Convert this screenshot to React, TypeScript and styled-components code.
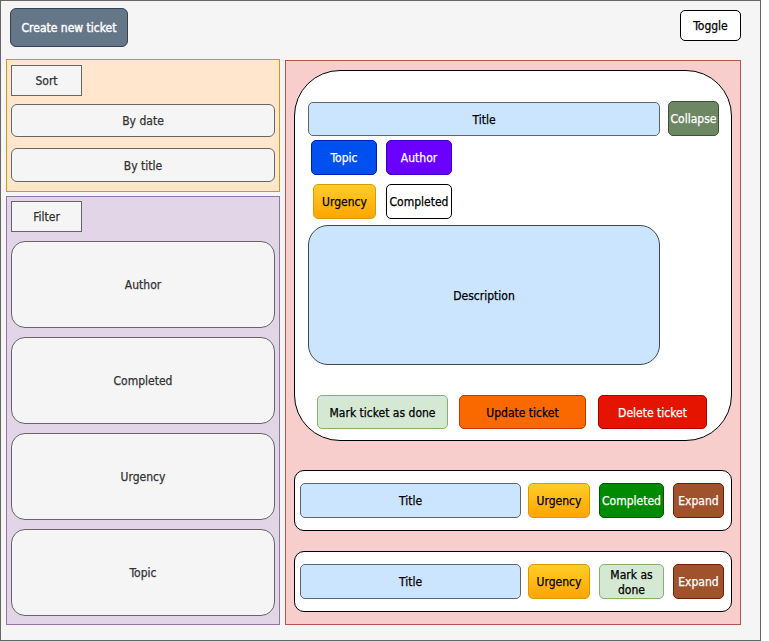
import React from 'react';
import styled, { createGlobalStyle, css } from 'styled-components';

const GlobalStyle = createGlobalStyle`
  html, body {
    margin: 0;
    padding: 0;
    background: #ffffff;
  }
  body {
    font-family: 'DejaVu Sans Condensed', 'DejaVu Sans', sans-serif;
    font-size: 12px;
  }
  * {
    box-sizing: border-box;
  }
`;

const Frame = styled.div`
  width: 761px;
  height: 641px;
  display: flex;
  flex-direction: column;
  background: #f5f5f5;
  border: 1px solid #666666;
`;

const Header = styled.div`
  height: 58px;
  display: flex;
  align-items: flex-start;
  justify-content: space-between;
  padding: 0 19px 0 9px;
  flex-shrink: 0;
`;

// shared centred-label look for every drawn box
const boxText = css`
  display: flex;
  align-items: center;
  justify-content: center;
  text-align: center;
  font-family: inherit;
  font-size: 12px;
  line-height: 15px;
  -webkit-text-stroke: 0.25px currentColor;
  padding: 2px 0 0;
  flex-shrink: 0;
`;

const CreateButton = styled.button`
  ${boxText};
  width: 118px;
  height: 39px;
  margin-top: 7px;
  background: #647687;
  border: 1px solid #314354;
  border-radius: 6px;
  color: #ffffff;
  -webkit-text-stroke: 0.4px currentColor;
`;

const ToggleButton = styled.button`
  ${boxText};
  width: 61px;
  height: 31px;
  margin-top: 9px;
  background: #ffffff;
  border: 1px solid #000000;
  border-radius: 5px;
  color: #000000;
`;

const Body = styled.div`
  flex: 1;
  display: flex;
  align-items: flex-start;
  gap: 5px;
  padding: 0 0 15px 5px;
  min-height: 0;
`;

const LeftColumn = styled.div`
  width: 274px;
  height: 100%;
  display: flex;
  flex-direction: column;
  gap: 4px;
`;

interface PanelProps {
  $fill: string;
  $stroke: string;
  $gap: number;
  $padTop: number;
  $grow?: boolean;
}

const Panel = styled.section<PanelProps>`
  display: flex;
  flex-direction: column;
  gap: ${({ $gap }) => $gap}px;
  padding: ${({ $padTop }) => $padTop}px 4px 0 4px;
  background: ${({ $fill }) => $fill};
  border: 1px solid ${({ $stroke }) => $stroke};
  height: ${({ $grow }) => ($grow ? 'auto' : '133px')};
  flex: ${({ $grow }) => ($grow ? 1 : 'none')};
`;

const PanelLabel = styled.div`
  ${boxText};
  width: 71px;
  height: 31px;
  background: #f5f5f5;
  border: 1px solid #666666;
  color: #333333;
`;

const OptionButton = styled.button<{ $height: number; $radius: number }>`
  ${boxText};
  width: 264px;
  height: ${({ $height }) => $height}px;
  background: #f5f5f5;
  border: 1px solid #666666;
  border-radius: ${({ $radius }) => $radius}px;
  color: #333333;
`;

const TicketPanel = styled.section`
  width: 456px;
  height: calc(100% - 1px);
  margin-top: 1px;
  display: flex;
  flex-direction: column;
  padding: 9px 8px 0 8px;
  background: #f8cecc;
  border: 1px solid #b85450;
`;

const ExpandedCard = styled.article`
  height: 371px;
  display: flex;
  flex-direction: column;
  align-items: flex-start;
  padding: 30px 0 0 13px;
  background: #ffffff;
  border: 1px solid #000000;
  border-radius: 46px;
`;

const Row = styled.div<{ $gap: number; $top?: number; $left?: number }>`
  display: flex;
  align-items: flex-start;
  gap: ${({ $gap }) => $gap}px;
  margin-top: ${({ $top = 0 }) => $top}px;
  padding-left: ${({ $left = 0 }) => $left}px;
`;

interface ChipProps {
  $w: number;
  $h?: number;
  $bg: string;
  $border: string;
  $color?: string;
  $radius?: number;
  $top?: number;
}

const Chip = styled.div<ChipProps>`
  ${boxText};
  width: ${({ $w }) => $w}px;
  height: ${({ $h = 35 }) => $h}px;
  margin-top: ${({ $top = 0 }) => $top}px;
  background: ${({ $bg }) => $bg};
  border: 1px solid ${({ $border }) => $border};
  border-radius: ${({ $radius = 5 }) => $radius}px;
  color: ${({ $color = '#000000' }) => $color};
`;

const Description = styled.div`
  ${boxText};
  width: 352px;
  height: 140px;
  margin-top: 6px;
  background: #cce5ff;
  border: 1px solid #42474d;
  border-radius: 20px;
  color: #000000;
`;

const SummaryCard = styled.article<{ $top: number }>`
  height: 61px;
  margin-top: ${({ $top }) => $top}px;
  display: flex;
  align-items: center;
  padding-left: 5px;
  background: #ffffff;
  border: 1px solid #000000;
  border-radius: 10px;
`;

const TITLE_BLUE = '#cce5ff';
const TITLE_STROKE = '#5c6570';
const URGENCY_BG = 'linear-gradient(180deg, #ffcd28 0%, #ffa500 100%)';

const filters = ['Author', 'Completed', 'Urgency', 'Topic'];

function TicketSummary({ top, done }: { top: number; done: boolean }) {
  return (
    <SummaryCard $top={top}>
      <Row $gap={0}>
        <Chip $w={221} $bg={TITLE_BLUE} $border={TITLE_STROKE}>
          Title
        </Chip>
        <Chip $w={62} $bg={URGENCY_BG} $border='#d79b00' style={{ marginLeft: 7 }}>
          Urgency
        </Chip>
        {done ? (
          <Chip $w={65} $bg='#008a00' $border='#005700' $color='#ffffff' style={{ marginLeft: 9 }}>
            Completed
          </Chip>
        ) : (
          <Chip $w={65} $bg='#d5e8d4' $border='#82b366' style={{ marginLeft: 9 }}>
            Mark as
            <br />
            done
          </Chip>
        )}
        <Chip $w={51} $bg='#a0522d' $border='#6d1f00' $color='#ffffff' style={{ marginLeft: 9 }}>
          Expand
        </Chip>
      </Row>
    </SummaryCard>
  );
}

export default function App() {
  return (
    <>
      <GlobalStyle />
      <Frame>
        <Header>
          <CreateButton>Create new ticket</CreateButton>
          <ToggleButton>Toggle</ToggleButton>
        </Header>

        <Body>
          <LeftColumn>
            <Panel $fill='#ffe6cc' $stroke='#d79b00' $gap={8} $padTop={5}>
              <PanelLabel>Sort</PanelLabel>
              <OptionButton $height={33} $radius={6}>
                By date
              </OptionButton>
              <OptionButton $height={34} $radius={6} style={{ marginTop: 3 }}>
                By title
              </OptionButton>
            </Panel>

            <Panel $fill='#e1d5e7' $stroke='#9673a6' $gap={9} $padTop={4} $grow>
              <PanelLabel>Filter</PanelLabel>
              {filters.map(f => (
                <OptionButton key={f} $height={87} $radius={14}>
                  {f}
                </OptionButton>
              ))}
            </Panel>
          </LeftColumn>

          <TicketPanel>
            <ExpandedCard>
              <Row $gap={8}>
                <Chip $w={352} $h={34} $top={1} $bg={TITLE_BLUE} $border={TITLE_STROKE}>
                  Title
                </Chip>
                <Chip $w={51} $bg='#6d8764' $border='#3a5431' $color='#ffffff'>
                  Collapse
                </Chip>
              </Row>

              <Row $gap={9} $top={4} $left={3}>
                <Chip $w={66} $bg='#0050ef' $border='#001dbc' $color='#ffffff'>
                  Topic
                </Chip>
                <Chip $w={66} $bg='#6a00ff' $border='#3700cc' $color='#ffffff'>
                  Author
                </Chip>
              </Row>

              <Row $gap={10} $top={9} $left={5}>
                <Chip $w={63} $bg={URGENCY_BG} $border='#d79b00'>
                  Urgency
                </Chip>
                <Chip $w={66} $bg='#ffffff' $border='#000000'>
                  Completed
                </Chip>
              </Row>

              <Description>Description</Description>

              <Row $gap={11} $top={30} $left={9}>
                <Chip $w={131} $h={34} $bg='#d5e8d4' $border='#82b366'>
                  Mark ticket as done
                </Chip>
                <Chip $w={127} $h={34} $bg='#fa6800' $border='#c73500'>
                  Update ticket
                </Chip>
                <Chip
                  $w={109}
                  $h={34}
                  $bg='#e51400'
                  $border='#b20000'
                  $color='#ffffff'
                  style={{ marginLeft: 1 }}
                >
                  Delete ticket
                </Chip>
              </Row>
            </ExpandedCard>

            <TicketSummary top={29} done />
            <TicketSummary top={20} done={false} />
          </TicketPanel>
        </Body>
      </Frame>
    </>
  );
}
